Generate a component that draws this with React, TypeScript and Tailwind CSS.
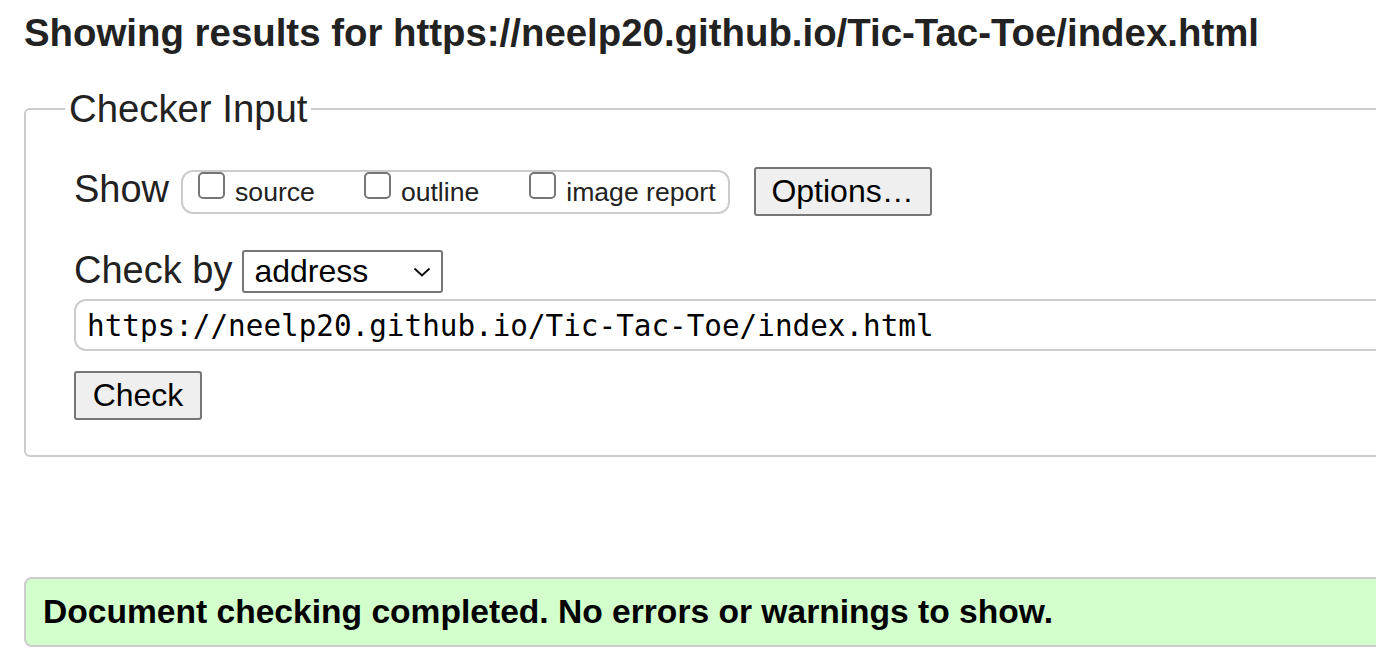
import React from "react";

function Box({ label, className = "" }: { label: string; className?: string }) {
  return (
    <label className={`flex items-start ${className}`}>
      <span className="mt-0 w-[27px] h-[27px] border-2 border-[#767676] rounded-[5px] bg-white shrink-0" />
      <span className="ml-[10px] text-[26.6px] leading-[40px] whitespace-nowrap">{label}</span>
    </label>
  );
}

export default function App() {
  return (
    <div className="w-[1376px] h-[648px] overflow-hidden bg-white text-[#222] font-['Liberation_Sans',Arial,sans-serif] pl-[24px] pt-[13px]">
      <h2 className="text-[38.4px] leading-[40px] font-bold whitespace-nowrap">
        Showing results for https://neelp20.github.io/Tic-Tac-Toe/index.html
      </h2>

      {/* Checker input */}
      <fieldset className="mt-[34px] w-[1420px] border-2 border-[#ccc] rounded-[6px] pb-[35px]">
        <legend className="ml-[39px] px-[4px] text-[38.3px] leading-[43px]">Checker Input</legend>

        <div className="pl-[48px]">
          <div className="mt-[37px] flex items-start">
            <span className="text-[38px] leading-[44px]">Show</span>
            <div className="ml-[12px] mt-[3px] h-[44px] flex items-start border-2 border-[#ccc] rounded-[12px] pl-[15px] pr-[12px]">
              <Box label="source" />
              <Box label="outline" className="ml-[49px]" />
              <Box label="image report" className="ml-[50px]" />
            </div>
            <button className="ml-[24px] w-[178px] h-[49px] border-2 border-[#767676] rounded-[3px] bg-[#efefef] text-black text-[32px] leading-[45px]">
              Options…
            </button>
          </div>

          <div className="mt-[34px] flex items-start">
            <span className="text-[38px] leading-[40px]">Check by</span>
            <div className="ml-[10px] w-[201px] h-[43px] border-2 border-[#767676] rounded-[3px] flex items-center justify-between pl-[10px] pr-[10px] text-black">
              <span className="text-[32px] leading-[39px]">address</span>
              <svg width="18" height="10" viewBox="0 0 18 10" fill="none">
                <path d="M1.5 1.5 L9 8.5 L16.5 1.5" stroke="#111" strokeWidth="2" />
              </svg>
            </div>
          </div>

          <div className="mt-[6px] h-[52px] border-2 border-[#ccc] rounded-[12px] pl-[11px] pt-[2px] font-['DejaVu_Sans_Mono',monospace] text-[29.3px] leading-[46px] text-black whitespace-nowrap">
            https://neelp20.github.io/Tic-Tac-Toe/index.html
          </div>

          <button className="mt-[20px] w-[128px] h-[49px] border-2 border-[#767676] rounded-[3px] bg-[#efefef] text-black text-[32px] leading-[45px]">
            Check
          </button>
        </div>
      </fieldset>

      {/* Result */}
      <div className="mt-[120px] w-[1420px] h-[70px] border-2 border-[#ccc] rounded-[8px] bg-[#d2ffcc] pl-[17px] text-black text-[33.6px] leading-[66px] font-bold whitespace-nowrap">
        Document checking completed. No errors or warnings to show.
      </div>
    </div>
  );
}
